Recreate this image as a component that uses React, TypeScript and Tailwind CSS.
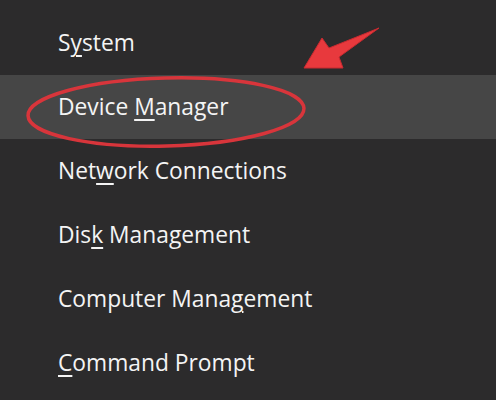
import React from "react";

const items: { pre: string; key: string; post: string; active?: boolean }[] = [
  { pre: "S", key: "y", post: "stem" },
  { pre: "Device ", key: "M", post: "anager", active: true },
  { pre: "Net", key: "w", post: "ork Connections" },
  { pre: "Dis", key: "k", post: " Management" },
  { pre: "Computer Mana", key: "g", post: "ement" },
  { pre: "", key: "C", post: "ommand Prompt" },
];

export default function App() {
  return (
    <div
      className="relative w-[496px] h-[400px] overflow-hidden bg-[#2c2b2c] pt-[11px]"
      style={{ fontFamily: '"Open Sans", "Noto Sans", sans-serif' }}
    >
      <div className="flex flex-col">
        {items.map((it, i) => (
          <div
            key={i}
            className={`h-[64px] flex items-center pl-[58px] pt-[1px] text-[22.8px] text-[#f4f4f4] ${
              it.active ? "bg-[#464646]" : ""
            }`}
          >
            <span>
              {it.pre}
              <span className="underline decoration-[1.5px] underline-offset-[4px]">{it.key}</span>
              {it.post}
            </span>
          </div>
        ))}
      </div>
      <svg
        className="absolute left-0 top-0 pointer-events-none"
        width="496"
        height="400"
        viewBox="0 0 496 400"
      >
        <ellipse
          cx="166"
          cy="112"
          rx="138"
          ry="34"
          fill="none"
          stroke="#d8353b"
          strokeWidth="3.5"
          transform="rotate(-1.5 166 112)"
        />
        <polygon
          points="304,68 322,38 329,48 379,28 339,57 343,68"
          fill="#e8393d"
          stroke="#c92a30"
          strokeWidth="1"
          strokeLinejoin="round"
        />
      </svg>
    </div>
  );
}
